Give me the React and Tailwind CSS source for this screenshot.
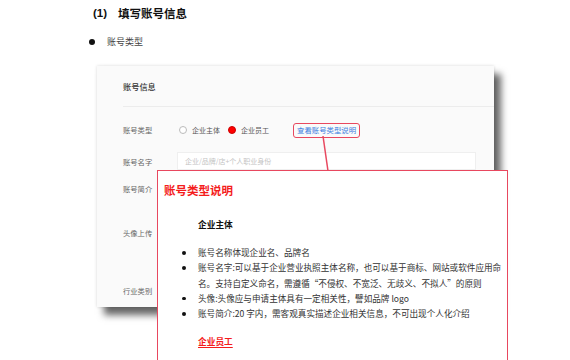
import React from "react";

const cjk = { fontFamily: '"Noto Sans CJK SC", "Noto Sans", sans-serif' };

function Label({ children }) {
  return (
    <div className="w-[54px] shrink-0 pl-[26px] text-[7.3px] leading-[16px] text-[#666] whitespace-nowrap">
      {children}
    </div>
  );
}

export default function App() {
  return (
    <div className="relative w-[570px] h-[360px] overflow-hidden bg-white" style={cjk}>
      {/* heading */}
      <div className="pt-[5px] pl-[93px] flex items-center h-[21px] text-[11.5px] font-bold text-[#111] leading-[16px]">
        <span style={{ fontFamily: '"Liberation Sans", sans-serif' }}>(1)</span>
        <span className="ml-[11px]">填写账号信息</span>
      </div>
      {/* bullet line */}
      <div className="mt-[13px] pl-[89px] flex items-center h-[16px]">
        <span className="w-[6px] h-[6px] rounded-full bg-[#111]" />
        <span className="ml-[12px] text-[9px] text-[#444] leading-[16px]">账号类型</span>
      </div>

      {/* screenshot card */}
      <div className="mt-[16px] ml-[97px] w-[397px] h-[241px] bg-[#fafafa] shadow-[7px_8px_7px_rgba(0,0,0,0.6),0_0_3px_rgba(0,0,0,0.15)] flex flex-col">
        <div className="h-[41px] mx-[26px] mr-0 border-b border-[#ececec] flex items-center text-[8.2px] font-medium text-[#333]">
          账号信息
        </div>
        {/* row 1 */}
        <div className="mt-[15px] flex items-center h-[16px]">
          <Label>账号类型</Label>
          <div className="ml-[28px] flex items-center text-[7px] text-[#555]">
            <span className="w-[8px] h-[8px] rounded-full border border-[#bbb] bg-white" />
            <span className="ml-[5px]">企业主体</span>
            <span className="ml-[8px] w-[8px] h-[8px] rounded-full bg-[#f00] border border-[#c00]" />
            <span className="ml-[5px]">企业员工</span>
            <span className="ml-[24px] h-[15px] px-[3px] rounded-[3px] border-[1.5px] border-[#e8485f] flex items-center text-[7.4px] text-[#3d7fe0]">
              查看账号类型说明
            </span>
          </div>
        </div>
        {/* row 2 */}
        <div className="mt-[16px] flex items-start h-[16px]">
          <Label>账号名字</Label>
          <div className="ml-[26px] mt-[-2px] w-[299px] h-[18px] bg-white border border-[#efefef] pl-[7px] flex items-center text-[7px] text-[#c4c4c4]">
            企业/品牌/店+个人职业身份
          </div>
        </div>
        {/* row 3 */}
        <div className="mt-[11px] flex items-center h-[16px]">
          <Label>账号简介</Label>
        </div>
        {/* row 4 */}
        <div className="mt-[28px] flex items-center h-[16px]">
          <Label>头像上传</Label>
        </div>
        {/* row 5 */}
        <div className="mt-[42px] flex items-center h-[16px]">
          <Label>行业类别</Label>
        </div>
      </div>

      {/* connector line */}
      <svg className="absolute left-0 top-0" width="570" height="360">
        <line x1="323" y1="136" x2="328" y2="171" stroke="#e8485f" strokeWidth="1.5" />
      </svg>

      {/* popup */}
      <div className="absolute left-[157px] top-[170px] w-[351px] h-[200px] bg-white border-[1.5px] border-[#e8485f] pt-[11px] pl-[6px]">
        <div className="text-[11.5px] font-bold text-[#f41c1c] leading-[16px]">账号类型说明</div>
        <div className="mt-[20px] pl-[34px] text-[8.7px] font-bold text-[#111] leading-[14px]">企业主体</div>
        <ul className="mt-[13px] text-[8.6px] text-[#333] leading-[15.3px]">
          {[
            ["账号名称体现企业名、品牌名"],
            [
              "账号名字:可以基于企业营业执照主体名称，也可以基于商标、网站或软件应用命",
              "名。支持自定义命名，需遵循“不侵权、不宽泛、无歧义、不拟人”的原则",
            ],
            ["头像:头像应与申请主体具有一定相关性，譬如品牌 logo"],
            ["账号简介:20 字内，需客观真实描述企业相关信息，不可出现个人化介绍"],
          ].map((lines, i) => (
            <li key={i} className="flex">
              <div className="w-[34px] shrink-0 flex justify-start pl-[18px] pt-[6px]">
                <span className="w-[3.5px] h-[3.5px] rounded-full bg-[#111]" />
              </div>
              <div className="whitespace-nowrap">
                {lines.map((l, j) => (
                  <div key={j}>{l}</div>
                ))}
              </div>
            </li>
          ))}
        </ul>
        <div className="mt-[14px] pl-[34px] text-[8.7px] font-bold text-[#f41c1c] leading-[14px] underline underline-offset-2">
          企业员工
        </div>
      </div>
    </div>
  );
}
